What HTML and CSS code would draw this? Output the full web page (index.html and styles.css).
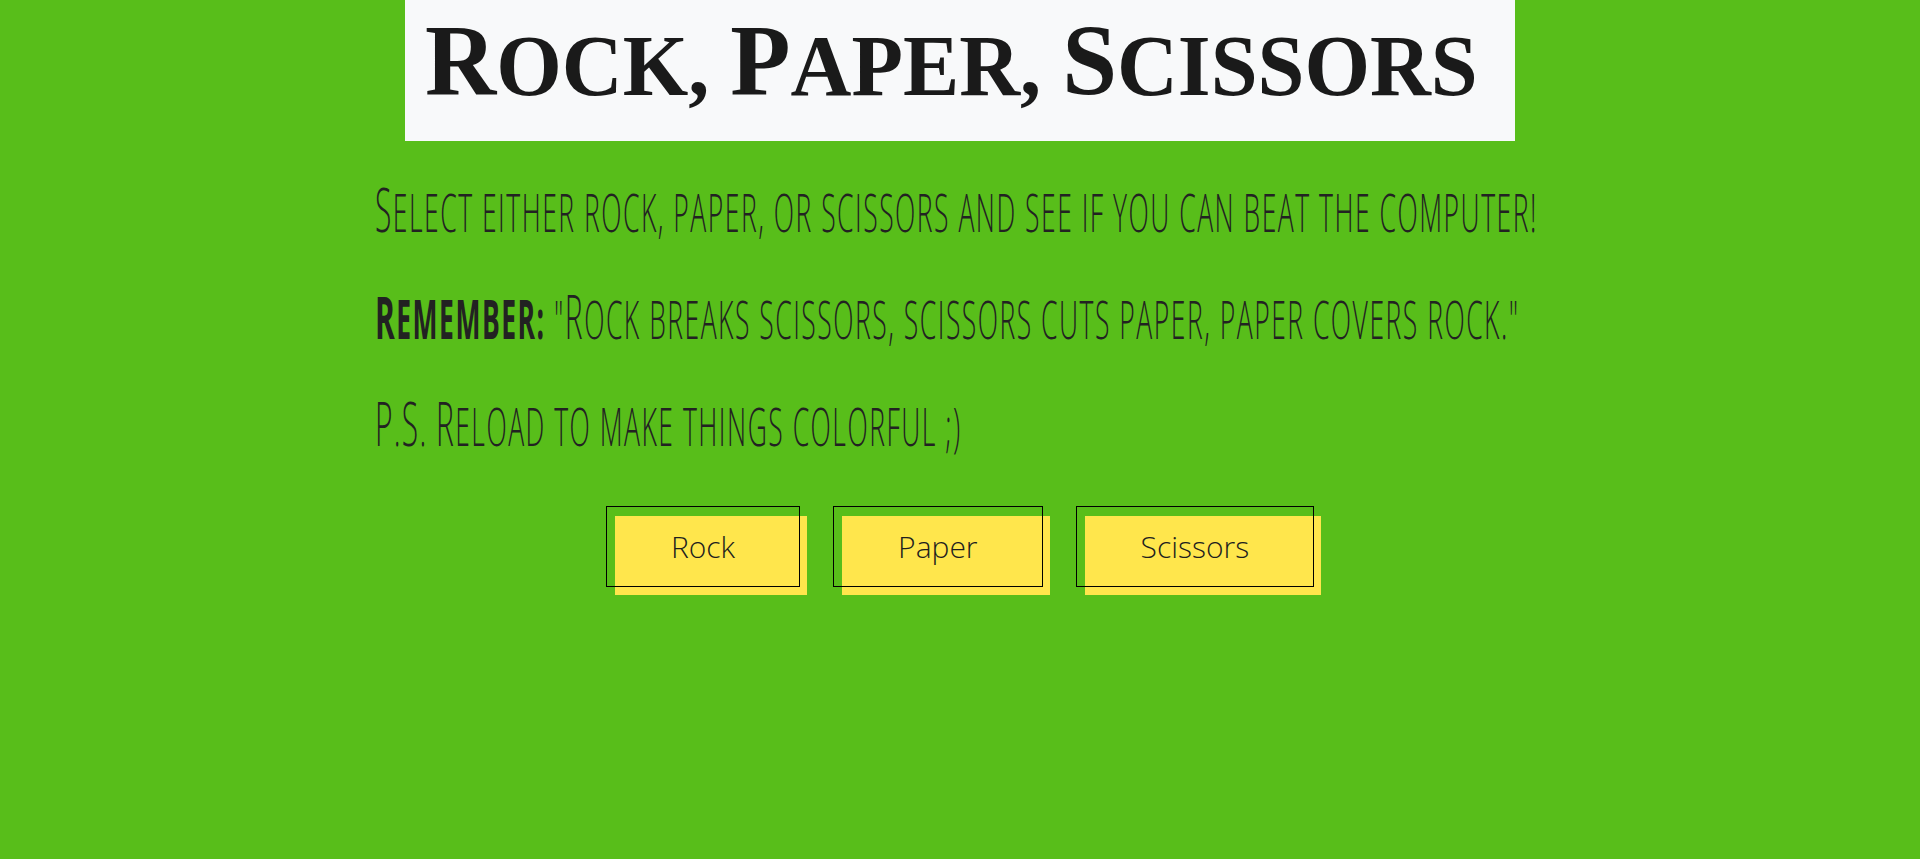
FILE: index.html
```html
<!DOCTYPE html>
<html lang="en">
<head>
<meta charset="utf-8">
<title>Rock, Paper, Scissors</title>
<link rel="stylesheet" href="styles.css">
</head>
<body>
<header class="title-box">
  <h1 class="title"><span class="squeeze title-squeeze"><span class="cap">R</span>ock, <span class="cap">P</span>aper, <span class="cap">S</span>cissors</span></h1>
</header>
<main class="intro">
  <p class="line"><span class="squeeze"><span class="cap">S</span>elect either rock, paper, or scissors and see if you can beat the computer!</span></p>
  <p class="line"><span class="squeeze"><strong><span class="cap">R</span>emember:</strong> "<span class="cap">R</span>ock breaks scissors, scissors cuts paper, paper covers rock."</span></p>
  <p class="line"><span class="squeeze"><span class="cap">P</span>.<span class="cap">S</span>. <span class="cap">R</span>eload to make things colorful ;)</span></p>
</main>
<div class="choices">
  <button class="choice">Rock</button>
  <button class="choice">Paper</button>
  <button class="choice">Scissors</button>
</div>
</body>
</html>
```

FILE: styles.css
```css
html, body {
  margin: 0;
  padding: 0;
}
body {
  background: #58be1a;
  color: #1e1e1e;
  font-family: "Liberation Sans", Arial, sans-serif;
  height: 859px;
  overflow: hidden;
}
.title-box {
  width: 1110px;
  height: 141px;
  margin: 0 auto;
  background: #f8f9fa;
  box-sizing: border-box;
  padding-left: 20px;
}
.title {
  margin: 0;
  font-family: "Liberation Serif", "Times New Roman", serif;
  font-weight: 700;
  font-size: 86px;
  line-height: 122px;
  text-transform: uppercase;
  color: #1a1a1a;
  white-space: nowrap;
}
.title .cap {
  font-size: 1.17em;
}
.squeeze {
  display: inline-block;
  transform-origin: left center;
  white-space: nowrap;
}
.title-squeeze {
  transform: scaleX(0.98);
}
.intro {
  width: 1170px;
  margin: 0 auto;
  padding-top: 36px;
}
.line {
  margin: 0 0 40px;
  font-family: "Open Sans", "Liberation Sans", sans-serif;
  font-weight: 300;
  font-size: 53px;
  line-height: 65px;
  letter-spacing: 3px;
  text-transform: uppercase;
  color: #222;
}
.line .squeeze {
  transform: scaleX(0.5);
}
.line .cap {
  font-size: 1.13em;
}
.line strong {
  font-weight: 700;
}
.choices {
  display: flex;
  justify-content: center;
  gap: 33px;
  margin-top: 48px;
}
.choice {
  position: relative;
  font-family: "Open Sans", "Liberation Sans", sans-serif;
  font-weight: 300;
  font-size: 30px;
  line-height: 43px;
  color: #1e1e1e;
  background: transparent;
  border: 1px solid #000;
  padding: 18px 64px;
  cursor: pointer;
}
.choice::before {
  content: "";
  position: absolute;
  left: 8px;
  top: 9px;
  width: 100%;
  height: 100%;
  background: #ffe64c;
  z-index: -1;
}
```
